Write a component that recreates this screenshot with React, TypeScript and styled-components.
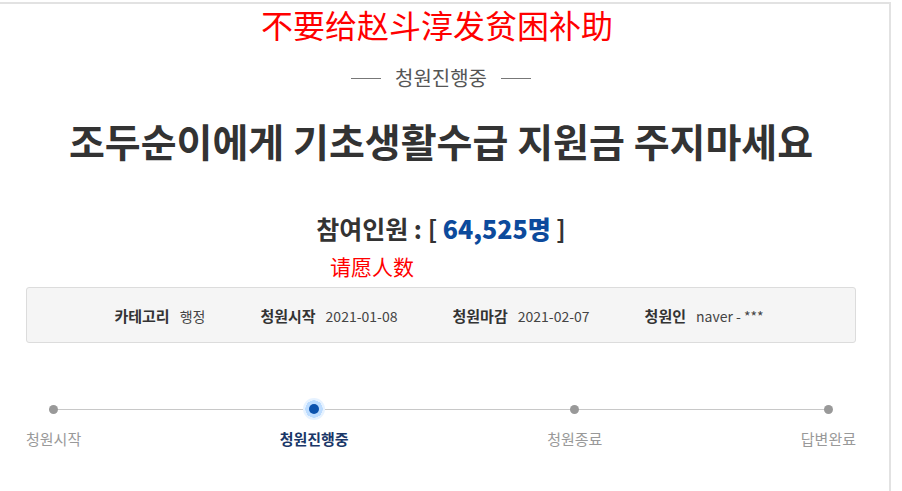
import React from "react";
import styled, { createGlobalStyle } from "styled-components";

const GlobalStyle = createGlobalStyle`
  body {
    margin: 0;
    background: #fff;
    font-family: "Noto Sans CJK KR", "Noto Sans", sans-serif;
  }
`;

const Page = styled.div`
  margin-top: 2px;
  width: 891px;
  height: 489px;
  border-top: 2px solid #e2e2e2;
  border-right: 2px solid #e2e2e2;
  box-sizing: border-box;
`;

const Content = styled.div`
  width: 882px;
  display: flex;
  flex-direction: column;
  align-items: center;
`;

const Note = styled.div<{ $size: number; $left?: number; $top?: number }>`
  color: #ff0000;
  font-family: "Noto Sans CJK SC", sans-serif;
  font-size: ${(p) => p.$size}px;
  line-height: ${(p) => Math.round(p.$size * 1.25)}px;
  margin-top: ${(p) => p.$top ?? 0}px;
  align-self: ${(p) => (p.$left !== undefined ? "flex-start" : "center")};
  padding-left: ${(p) => p.$left ?? 0}px;
  padding-right: ${(p) => (p.$left !== undefined ? 0 : 8)}px;
`;

const Status = styled.div`
  margin-top: 21px;
  display: flex;
  align-items: center;
  gap: 14px;
  font-size: 20px;
  color: #555;
  line-height: 26px;

  &::before,
  &::after {
    content: "";
    width: 30px;
    height: 1px;
    background: #777;
  }
`;

const Title = styled.h1`
  margin: 25px 0 0;
  font-size: 39px;
  font-weight: 700;
  color: #333;
  line-height: 48px;
`;

const Count = styled.div`
  margin-top: 48px;
  font-size: 25px;
  font-weight: 700;
  color: #333;
  line-height: 32px;

  strong {
    color: #0c4a9c;
  }
`;

const InfoBox = styled.div`
  margin-top: 8px;
  width: 830px;
  height: 56px;
  box-sizing: border-box;
  background: #f5f5f5;
  border: 1px solid #dcdcdc;
  border-radius: 3px;
  display: flex;
  justify-content: center;
  align-items: center;
  gap: 55px;
  padding-right: 4px;
`;

const InfoItem = styled.div`
  font-size: 14px;
  color: #444;
  display: flex;
  align-items: baseline;
  gap: 10px;

  b {
    font-size: 15px;
    color: #333;
  }
`;

const Steps = styled.div`
  position: relative;
  margin-top: 55px;
  width: 830px;
  display: flex;
  justify-content: space-between;

  &::before {
    content: "";
    position: absolute;
    left: 27px;
    right: 28px;
    top: 11px;
    height: 1px;
    background: #c8c8c8;
  }
`;

const Step = styled.div<{ $active?: boolean }>`
  position: relative;
  display: flex;
  flex-direction: column;
  align-items: center;
  gap: 8px;
  font-size: 15px;
  color: ${(p) => (p.$active ? "#1a3768" : "#999")};
  font-weight: ${(p) => (p.$active ? 700 : 400)};
`;

const Dot = styled.span<{ $active?: boolean }>`
  width: 22px;
  height: 22px;
  display: flex;
  align-items: center;
  justify-content: center;
  border-radius: 50%;
  background: ${(p) =>
    p.$active ? "radial-gradient(circle, #bcdcff 0 55%, #e6f2ff 56% 100%)" : "transparent"};

  &::after {
    content: "";
    width: ${(p) => (p.$active ? 10 : 9)}px;
    height: ${(p) => (p.$active ? 10 : 9)}px;
    border-radius: 50%;
    background: ${(p) => (p.$active ? "#0b52ad" : "#999")};
  }
`;

const steps = ["청원시작", "청원진행중", "청원종료", "답변완료"];

export default function App() {
  return (
    <>
      <GlobalStyle />
      <Page>
        <Content>
          <Note $size={32}>不要给赵斗淳发贫困补助</Note>
          <Status>청원진행중</Status>
          <Title>조두순이에게 기초생활수급 지원금 주지마세요</Title>
          <Count>
            참여인원 : [ <strong>64,525명</strong> ]
          </Count>
          <Note $size={21} $left={330} $top={9}>
            请愿人数
          </Note>
          <InfoBox>
            <InfoItem>
              <b>카테고리</b>행정
            </InfoItem>
            <InfoItem>
              <b>청원시작</b>2021-01-08
            </InfoItem>
            <InfoItem>
              <b>청원마감</b>2021-02-07
            </InfoItem>
            <InfoItem>
              <b>청원인</b>naver - ***
            </InfoItem>
          </InfoBox>
          <Steps>
            {steps.map((s, i) => (
              <Step key={s} $active={i === 1}>
                <Dot $active={i === 1} />
                {s}
              </Step>
            ))}
          </Steps>
        </Content>
      </Page>
    </>
  );
}
